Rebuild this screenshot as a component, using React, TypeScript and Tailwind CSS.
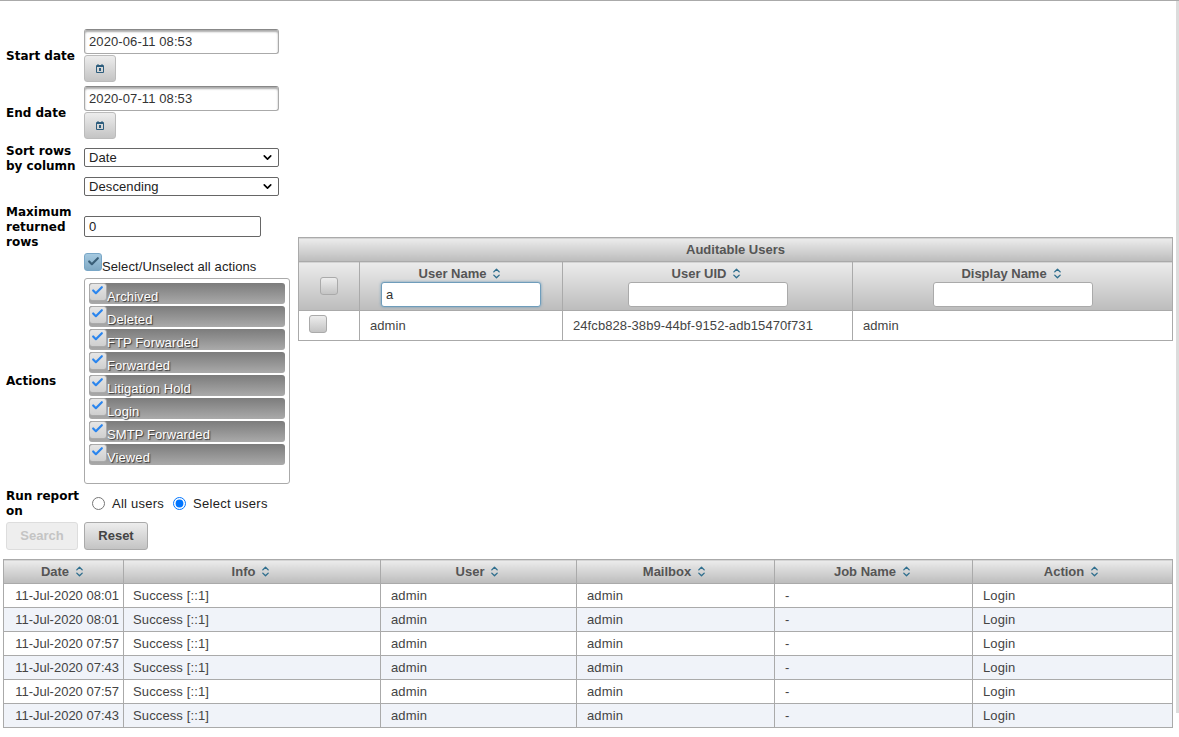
import { ChevronDown, ChevronsUpDown, Check } from 'lucide-react';

const actions = ['Archived', 'Deleted', 'FTP Forwarded', 'Forwarded', 'Litigation Hold', 'Login', 'SMTP Forwarded', 'Viewed'];

const dates = [
  '11-Jul-2020 08:01',
  '11-Jul-2020 08:01',
  '11-Jul-2020 07:57',
  '11-Jul-2020 07:43',
  '11-Jul-2020 07:57',
  '11-Jul-2020 07:43',
];

const label = 'w-[78px] shrink-0 font-["DejaVu_Sans"] text-[12px] leading-[15px] font-bold text-black';
const textInput =
  'block h-[25px] w-[195px] rounded-[3px] border border-[#aaa] border-t-[#888] bg-white px-1 text-[13px] tracking-[0.1px] text-[#333] shadow-[inset_0_2px_2px_#aaa]';
const selectBox =
  'flex h-[19px] w-[195px] items-center justify-between rounded-[2px] border border-[#666] bg-white pr-1 pl-1 text-[13px] tracking-[0.1px] text-[#222]';
const headGradient = 'bg-gradient-to-b from-[#ececec] to-[#bcbcbc]';
const headText = 'text-[13px] leading-[15px] font-bold text-[#555]';

function SortIcon() {
  return <ChevronsUpDown className="ml-[4px] inline-block size-[13px] align-[-2px] text-[#2e6e8e]" strokeWidth={2.5} />;
}

function CalendarButton() {
  return (
    <button className="flex h-[27px] w-[32px] items-center justify-center rounded-[3px] border border-[#bbb] bg-gradient-to-b from-[#ededed] to-[#c4c4c4]">
      <svg width="8" height="9" viewBox="0 0 8 9">
        <path d="M0.5 1.5h7v7h-7z M2 0v1.5 M6 0v1.5 M0.5 2.5h7" fill="none" stroke="#2e5e7e" strokeWidth="1" />
        <path d="M3 4h2v3H3z" fill="#2e5e7e" />
      </svg>
    </button>
  );
}

function Box({ tone = 'plain', className = '' }: { tone?: 'plain' | 'checked' | 'active'; className?: string }) {
  const look =
    tone === 'active'
      ? 'border-[#79a7c7] bg-gradient-to-b from-[#a5c9e0] to-[#7fa9c4]'
      : tone === 'checked'
        ? 'border-[#aaa] bg-gradient-to-b from-[#e6e6e6] to-[#cfcfcf]'
        : 'border-[#aaa] bg-gradient-to-b from-[#ededed] to-[#c4c4c4]';
  return (
    <span className={`flex size-[18px] shrink-0 items-center justify-center rounded-[3px] border ${look} ${className}`}>
      {tone === 'checked' && <Check className="size-[13px] -translate-x-[1px] -translate-y-[2px] text-[#2a85ee]" strokeWidth={4} />}
      {tone === 'active' && <Check className="size-[13px] -translate-y-[1px] text-[#3a5f78]" strokeWidth={4} />}
    </span>
  );
}

function ActionItem({ name }: { name: string }) {
  return (
    <div className="flex h-[21px] items-start rounded-[3px] bg-gradient-to-b from-[#7c7c7c] to-[#aaaaaa] pr-1">
      <Box tone="checked" />
      <span className="mt-[6px] text-[13px] leading-[15px] tracking-[0.1px] text-white [text-shadow:1px_1px_1px_#333]">{name}</span>
    </div>
  );
}

function FilterForm() {
  return (
    <div className="w-[284px] shrink-0">
      <div className="flex items-center">
        <span className={`${label} pt-[2px]`}>Start date</span>
        <div className="flex flex-col gap-[1px]">
          <input readOnly value="2020-06-11 08:53" className={textInput} />
          <CalendarButton />
        </div>
      </div>
      <div className="mt-[4px] flex items-center">
        <span className={`${label} pt-[2px]`}>End date</span>
        <div className="flex flex-col gap-[1px]">
          <input readOnly value="2020-07-11 08:53" className={textInput} />
          <CalendarButton />
        </div>
      </div>
      <div className="mt-[4px] flex items-start">
        <span className={`${label} pt-[1px]`}>Sort rows by column</span>
        <div className="mt-[5px] flex flex-col gap-[10px]">
          <div className={selectBox}>
            Date
            <ChevronDown className="size-[13px] text-black" strokeWidth={3} />
          </div>
          <div className={selectBox}>
            Descending
            <ChevronDown className="size-[13px] text-black" strokeWidth={3} />
          </div>
        </div>
      </div>
      <div className="mt-[8px] flex items-start">
        <span className={`${label} pt-[1px]`}>Maximum returned rows</span>
        <input
          readOnly
          value="0"
          className="mt-[12px] h-[21px] w-[177px] rounded-[2px] border border-[#666] bg-white px-1 text-[13px] text-[#222]"
        />
      </div>
      <div className="mt-[3px] ml-[78px] flex items-start">
        <Box tone="active" />
        <span className="mt-[6px] text-[13px] leading-[15px] tracking-[0.1px] text-[#222]">Select/Unselect all actions</span>
      </div>
      <div className="mt-[4px] flex items-center">
        <span className={label}>Actions</span>
        <div className="h-[206px] w-[206px] rounded-[3px] border border-[#aaa] bg-white p-1">
          <div className="flex flex-col gap-[2px]">
            {actions.map((name) => (
              <ActionItem key={name} name={name} />
            ))}
          </div>
        </div>
      </div>
      <div className="mt-[5px] flex items-center">
        <span className={label}>Run report on</span>
        <label className="ml-[8px] flex items-center gap-[7px] text-[13px] tracking-[0.25px] text-[#222]">
          <input type="radio" name="scope" readOnly className="mb-[2px] size-[13px]" />
          All users
        </label>
        <label className="ml-[9px] flex items-center gap-[7px] text-[13px] tracking-[0.25px] text-[#222]">
          <input type="radio" name="scope" readOnly checked className="mb-[2px] size-[13px] accent-[#0075ff]" />
          Select users
        </label>
      </div>
      <div className="mt-[3px] flex gap-[6px]">
        <button className="h-[28px] w-[72px] rounded-[3px] border border-[#ddd] bg-[#eeeeee] text-[13px] font-bold text-[#c4c4c4]">
          Search
        </button>
        <button className="h-[28px] w-[64px] rounded-[3px] border border-[#aaa] bg-gradient-to-b from-[#ededed] to-[#c4c4c4] text-[13px] font-bold text-[#444]">
          Reset
        </button>
      </div>
    </div>
  );
}

function UsersTable() {
  const th = `border border-[#aaa] pt-[4px] align-top ${headText} ${headGradient}`;
  const filter = 'mx-auto mt-[1px] block h-[25px] w-[160px] rounded-[3px] border border-[#aaa] bg-white px-1 text-[13px] text-[#333]';
  return (
    <table className="mt-[208px] ml-[8px] w-[874px] table-fixed border-collapse self-start">
      <colgroup>
        <col className="w-[61px]" />
        <col className="w-[203px]" />
        <col className="w-[290px]" />
        <col className="w-[320px]" />
      </colgroup>
      <thead>
        <tr className="h-[24px]">
          <th colSpan={4} className={`border border-[#aaa] ${headText} ${headGradient}`}>
            Auditable Users
          </th>
        </tr>
        <tr className="h-[49px]">
          <th className={`border border-[#aaa] align-middle ${headGradient}`}>
            <Box className="mx-auto" />
          </th>
          <th className={th}>
            User Name
            <SortIcon />
            <input
              readOnly
              value="a"
              className="mx-auto mt-[1px] block h-[25px] w-[160px] rounded-[3px] border border-[#6f9dbb] bg-white px-1 text-[13px] font-normal text-[#333] shadow-[0_0_3px_#6f9dbb]"
            />
          </th>
          <th className={th}>
            User UID
            <SortIcon />
            <input readOnly className={filter} />
          </th>
          <th className={th}>
            Display Name
            <SortIcon />
            <input readOnly className={filter} />
          </th>
        </tr>
      </thead>
      <tbody>
        <tr className="h-[30px] text-[13px] tracking-[0.08px] text-[#444]">
          <td className="border border-[#aaa] pb-[3px] pl-[10px]">
            <Box />
          </td>
          <td className="border border-[#aaa] px-[10px]">admin</td>
          <td className="border border-[#aaa] px-[10px]">24fcb828-38b9-44bf-9152-adb15470f731</td>
          <td className="border border-[#aaa] px-[10px]">admin</td>
        </tr>
      </tbody>
    </table>
  );
}

function ResultsTable() {
  const heads = ['Date', 'Info', 'User', 'Mailbox', 'Job Name', 'Action'];
  const td = 'border border-[#aaa] px-[10px] tracking-[0.12px]';
  return (
    <table className="mt-[9px] ml-[3px] w-[1169px] table-fixed border-collapse">
      <colgroup>
        <col className="w-[120px]" />
        <col className="w-[257px]" />
        <col className="w-[196px]" />
        <col className="w-[198px]" />
        <col className="w-[198px]" />
        <col className="w-[200px]" />
      </colgroup>
      <thead>
        <tr className="h-[24px]">
          {heads.map((h) => (
            <th key={h} className={`border border-[#aaa] ${headText} ${headGradient}`}>
              {h}
              <SortIcon />
            </th>
          ))}
        </tr>
      </thead>
      <tbody>
        {dates.map((date, i) => (
          <tr key={i} className={`h-[24px] text-[13px] text-[#444] ${i % 2 === 1 ? 'bg-[#f0f3f9]' : 'bg-white'}`}>
            <td className="border border-[#aaa] pr-[4px] text-right whitespace-nowrap">{date}</td>
            <td className={`${td} !pl-[9px]`}>Success [::1]</td>
            <td className={td}>admin</td>
            <td className={td}>admin</td>
            <td className={td}>-</td>
            <td className={td}>Login</td>
          </tr>
        ))}
      </tbody>
    </table>
  );
}

export default function App() {
  return (
    <div className="relative h-[737px] overflow-hidden border-t border-[#aaa] bg-white font-['Liberation_Sans',sans-serif]">
      <div className="flex pt-[28px] pl-[6px]">
        <FilterForm />
        <UsersTable />
      </div>
      <ResultsTable />
      {/* page scrollbar sliver on the right edge */}
      <div className="absolute top-[-1px] right-0 h-[713px] w-[3px] bg-[#dcdcdc]" />
    </div>
  );
}
